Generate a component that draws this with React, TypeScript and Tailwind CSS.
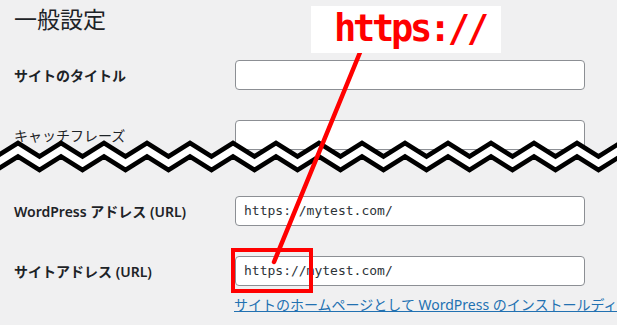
import React from "react";

const FONT = { fontFamily: '"Noto Sans", "Noto Sans CJK JP", sans-serif' };
const MONO = { fontFamily: '"DejaVu Sans Mono", "Liberation Mono", monospace' };

function Zigzag() {
  const period = 43;
  const top: string[] = [];
  const bot: string[] = [];
  for (let k = -2; k < 16; k++) {
    const px = 18 + period * k;
    const vx = px + period / 2;
    top.push(`${px},13`, `${vx},26.5`);
    bot.push(`${px},26.5`, `${vx},40`);
  }
  const fillPts = [...top, ...[...bot].reverse()].join(" ");
  const grayPts = [...bot, "700,60", "-100,60"].join(" ");
  return (
    <svg
      className="absolute left-0 top-[130px]"
      width={617}
      height={56}
      viewBox="0 0 617 56"
    >
      <polygon points={grayPts} fill="#f0f0f1" />
      <polygon points={fillPts} fill="#ffffff" />
      <polyline points={top.join(" ")} fill="none" stroke="#000" strokeWidth={4.6} />
      <polyline points={bot.join(" ")} fill="none" stroke="#000" strokeWidth={4.6} />
    </svg>
  );
}

function Row({
  label,
  value,
  labelClass = "font-semibold",
  className = "",
}: {
  label: string;
  value?: string;
  labelClass?: string;
  className?: string;
}) {
  return (
    <div className={`flex items-center h-[30px] ${className}`}>
      <div className={`w-[235px] shrink-0 pl-[14px] text-[14px] text-[#1d2327] whitespace-nowrap ${labelClass}`}>
        {label}
      </div>
      <div className="w-[350px] shrink-0 h-[30px] bg-white border border-[#8c8f94] rounded-[4px] flex items-center px-[8px]">
        {value && (
          <span className="text-[13px] text-[#2c3338] whitespace-nowrap" style={MONO}>
            {value}
          </span>
        )}
      </div>
    </div>
  );
}

export default function App() {
  return (
    <div
      className="relative w-[617px] h-[325px] bg-[#f0f0f1] overflow-hidden"
      style={FONT}
    >
      <div className="h-[60px] pl-[14px] pt-[3px]">
        <h1 className="text-[23px] font-normal leading-[32px] text-[#1d2327]">一般設定</h1>
      </div>
      <Row label="サイトのタイトル" />
      <Row label="キャッチフレーズ" labelClass="font-normal" className="mt-[30px]" />
      <Row label="WordPress アドレス (URL)" value="https://mytest.com/" className="mt-[46px]" />
      <Row label="サイトアドレス (URL)" value="https://mytest.com/" className="mt-[30px]" />
      <div className="pl-[234px] mt-[6px] whitespace-nowrap">
        <span className="text-[14px] leading-[16px] text-[#2271b1] underline">
          サイトのホームページとして WordPress のインストールディ
        </span>
      </div>

      <Zigzag />

      <svg className="absolute left-0 top-0" width={617} height={325}>
        <line x1={361} y1={50} x2={274} y2={262} stroke="#ff0000" strokeWidth={4.5} strokeLinecap="round" />
      </svg>

      <div className="absolute left-[231px] top-[248px] w-[82px] h-[45px] border-4 border-[#ff0000]" />

      <div className="absolute left-[311px] top-[6px] w-[190px] h-[47px] bg-white flex items-center pl-[23px]">
        <span
          className="text-[37px] font-bold text-[#ff0000] leading-none tracking-[-3.3px] mt-[-2px]"
          style={MONO}
        >
          https://
        </span>
      </div>
    </div>
  );
}
